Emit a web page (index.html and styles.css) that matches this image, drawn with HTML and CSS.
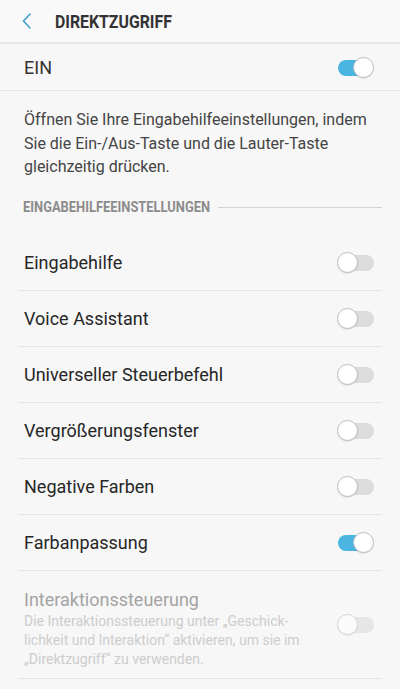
FILE: index.html
```html
<!DOCTYPE html>
<html lang="de">
<head>
    <meta charset="UTF-8">
    <meta name="viewport" content="width=device-width, initial-scale=1.0">
    <title>Direktzugriff</title>
    <link rel="stylesheet" href="styles.css">
</head>
<body>
    <header class="topbar">
        <svg class="back" width="12" height="18" viewBox="0 0 12 18">
            <path d="M9 2 L2.5 9 L9 16" fill="none" stroke="#3d9fca" stroke-width="1.6" stroke-linecap="round" stroke-linejoin="round"/>
        </svg>
        <h1>DIREKTZUGRIFF</h1>
    </header>

    <div class="master">
        <span>EIN</span>
        <span class="switch on"></span>
    </div>

    <p class="info">Öffnen Sie Ihre Eingabehilfeeinstellungen, indem Sie die Ein-/Aus-Taste und die Lauter-Taste gleichzeitig drücken.</p>

    <div class="section">
        <span class="label">EINGABEHILFEEINSTELLUNGEN</span>
    </div>

    <ul class="list">
        <li class="row"><span>Eingabehilfe</span><span class="switch"></span></li>
        <li class="row"><span>Voice Assistant</span><span class="switch"></span></li>
        <li class="row"><span>Universeller Steuerbefehl</span><span class="switch"></span></li>
        <li class="row"><span>Vergrößerungsfenster</span><span class="switch"></span></li>
        <li class="row"><span>Negative Farben</span><span class="switch"></span></li>
        <li class="row"><span>Farbanpassung</span><span class="switch on"></span></li>
        <li class="row disabled">
            <div class="text">
                <div class="title">Interaktionssteuerung</div>
                <div class="sub">Die Interaktionssteuerung unter „Geschick-<br>lichkeit und Interaktion“ aktivieren, um sie im<br>„Direktzugriff“ zu verwenden.</div>
            </div>
            <span class="switch"></span>
        </li>
    </ul>
</body>
</html>
```

FILE: styles.css
```css
body {
    margin: 0;
    background-color: #f7f7f7;
    font-family: Roboto, "Noto Sans", sans-serif;
    color: #252525;
}

.topbar {
    display: flex;
    align-items: center;
    height: 44px;
    padding-left: 21px;
    background-color: #f9f9f9;
    border-bottom: 2px solid #e8e8e8;
    box-sizing: border-box;
}

.topbar .back {
    display: block;
}

.topbar h1 {
    margin: 0 0 0 22px;
    font-family: Roboto, sans-serif;
    font-size: 18px;
    font-weight: bold;
    color: #333;
    transform: scaleX(0.88);
    transform-origin: left center;
}

.master {
    display: flex;
    justify-content: space-between;
    align-items: center;
    height: 46px;
    padding: 0 26px 0 24px;
    border-bottom: 1px solid #e4e4e4;
    font-size: 18px;
    color: #333;
}

.info {
    margin: 0;
    padding: 17px 24px 0 24px;
    font-size: 16px;
    line-height: 23.5px;
    color: #444;
}

.section {
    display: flex;
    align-items: center;
    margin: 0 18px 0 23px;
    height: 56px;
    padding-top: 1px;
    box-sizing: border-box;
}

.section .label {
    font-family: Roboto, sans-serif;
    font-size: 15px;
    font-weight: bold;
    color: #8c8c8c;
    transform: scaleX(0.86);
    transform-origin: left center;
    margin-right: -30px;
}

.section::after {
    content: "";
    flex: 1;
    height: 1px;
    margin-left: 7px;
    background-color: #d4d4d4;
}

.list {
    list-style: none;
    margin: 0;
    padding: 0;
}

.row {
    display: flex;
    justify-content: space-between;
    align-items: center;
    height: 55px;
    margin: 0 18px;
    padding: 0 8px 0 6px;
    border-bottom: 1px solid #e4e4e4;
    font-size: 18px;
    color: #262626;
}

.row.disabled {
    align-items: flex-start;
    padding-top: 17px;
    box-sizing: border-box;
    height: 108px;
}

.disabled .title {
    font-size: 18px;
    line-height: 24px;
    color: #a3a3a3;
}

.disabled .sub {
    font-size: 14px;
    line-height: 19px;
    color: #cdcdcd;
}

.disabled .switch {
    margin-top: 26px;
    opacity: 0.6;
}

/* schalter */
.switch {
    position: relative;
    width: 37px;
    height: 21px;
    flex-shrink: 0;
}

.switch::before {
    content: "";
    position: absolute;
    left: 1px;
    right: 0;
    top: 3px;
    height: 16px;
    border-radius: 8px;
    background-color: #dcdcdc;
}

.switch::after {
    content: "";
    position: absolute;
    left: 0;
    top: 0;
    width: 19px;
    height: 19px;
    border-radius: 50%;
    background-color: #fff;
    border: 1px solid #bdbdbd;
    box-shadow: 0 1px 1px rgba(0, 0, 0, 0.08);
}

.switch.on::before {
    background-color: #4bb5e2;
    right: 4px;
}

.switch.on::after {
    left: auto;
    right: 0;
}
```
